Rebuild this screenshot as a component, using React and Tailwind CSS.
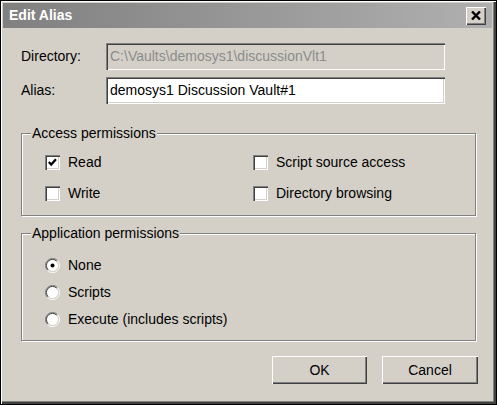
const font = { fontFamily: '"Liberation Sans", Arial, sans-serif' };

function CheckBox({ checked, label }) {
  return (
    <div className="flex h-[20px] items-center">
      <div className="flex h-[15px] w-[15px] items-center justify-center bg-white shadow-[inset_1px_1px_0_#808080,inset_2px_2px_0_#404040,inset_-1px_-1px_0_#fff,inset_-2px_-2px_0_#d4d0c8]">
        {checked && (
          <svg width="15" height="15" viewBox="0 0 15 15">
            <polyline points="3.8,7 6.2,9.6 11,4.2" fill="none" stroke="#000" strokeWidth="2.2" />
          </svg>
        )}
      </div>
      <span className="ml-[8px] text-[14px] text-black">{label}</span>
    </div>
  );
}

function Radio({ checked, label }) {
  return (
    <div className="flex h-[20px] items-center">
      <svg width="15" height="15" viewBox="0 0 15 15">
        <circle cx="7.5" cy="7.5" r="6" fill="#fff" />
        <path d="M2.5 12.5 A7 7 0 0 1 12.5 2.5" fill="none" stroke="#808080" />
        <path d="M12.5 2.5 A7 7 0 0 1 2.5 12.5" fill="none" stroke="#fff" />
        <path d="M3.2 11.8 A6 6 0 0 1 11.8 3.2" fill="none" stroke="#404040" />
        <path d="M11.8 3.2 A6 6 0 0 1 3.2 11.8" fill="none" stroke="#d4d0c8" />
        {checked && <circle cx="7.5" cy="7.5" r="2" fill="#000" />}
      </svg>
      <span className="ml-[8px] text-[14px] text-black">{label}</span>
    </div>
  );
}

function Button({ children, className = '' }) {
  return (
    <button className={`flex h-[28px] items-center justify-center bg-[#d4d0c8] text-[14px] text-black shadow-[inset_1px_1px_0_#fff,inset_-1px_-1px_0_#404040,inset_-2px_-2px_0_#808080] ${className}`}>
      {children}
    </button>
  );
}

function Group({ title, className = '', children }) {
  return (
    <div className={`relative w-[455px] border border-[#808080] shadow-[inset_1px_1px_0_#fff,1px_1px_0_#fff] ${className}`}>
      <span className="absolute -top-[9px] left-[9px] bg-[#d4d0c8] px-[1px] text-[14px] leading-[16px] text-black">{title}</span>
      {children}
    </div>
  );
}

export default function App() {
  return (
    <div style={font} className="flex h-[405px] w-[497px] flex-col border border-black bg-[#d4d0c8] pb-[4px] pl-[2px] pr-[4px] pt-[2px] shadow-[inset_1px_1px_0_#fff,inset_-1px_-1px_0_#404040,inset_-2px_-2px_0_#404040,inset_-3px_-3px_0_#808080]">
      <div className="flex h-[25px] shrink-0 items-center justify-between bg-gradient-to-r from-[#808080] to-[#b0b0b0] pl-[6px] pr-[6px]">
        <span className="text-[14px] font-bold text-white">Edit Alias</span>
        <div className="flex h-[18px] w-[20px] items-center justify-center bg-[#d4d0c8] shadow-[inset_1px_1px_0_#fff,inset_-1px_-1px_0_#404040,inset_-2px_-2px_0_#808080]">
          <svg width="10" height="9" viewBox="0 0 10 9">
            <path d="M1 0.5 L9 8.5 M9 0.5 L1 8.5" stroke="#000" strokeWidth="2.4" />
          </svg>
        </div>
      </div>

      <div className="flex flex-col pl-[18px]">
        <div className="mt-[15px] flex items-center">
          <span className="w-[85px] text-[14px] text-black">Directory:</span>
          <div className="flex h-[27px] w-[339px] items-center bg-[#d4d0c8] px-[4px] text-[14px] text-[#8c8c8c] shadow-[inset_1px_1px_0_#808080,inset_2px_2px_0_#404040,inset_-1px_-1px_0_#fff,inset_-2px_-2px_0_#d4d0c8]">
            C:\Vaults\demosys1\discussionVlt1
          </div>
        </div>
        <div className="mt-[7px] flex items-center">
          <span className="w-[85px] text-[14px] text-black">Alias:</span>
          <div className="flex h-[27px] w-[339px] items-center bg-white px-[4px] text-[14px] text-black shadow-[inset_1px_1px_0_#808080,inset_2px_2px_0_#404040,inset_-1px_-1px_0_#fff,inset_-2px_-2px_0_#d4d0c8]">
            demosys1 Discussion Vault#1
          </div>
        </div>

        <Group title="Access permissions" className="mt-[29px] h-[83px]">
          <div className="grid grid-cols-[208px_1fr] gap-y-[11px] pl-[23px] pt-[18px]">
            <CheckBox checked label="Read" />
            <CheckBox label="Script source access" />
            <CheckBox label="Write" />
            <CheckBox label="Directory browsing" />
          </div>
        </Group>

        <Group title="Application permissions" className="mt-[17px] h-[108px]">
          <div className="flex flex-col gap-[7px] pl-[23px] pt-[21px]">
            <Radio checked label="None" />
            <Radio label="Scripts" />
            <Radio label="Execute (includes scripts)" />
          </div>
        </Group>

        <div className="mt-[15px] flex w-[457px] justify-end gap-[15px]">
          <Button className="w-[95px]">OK</Button>
          <Button className="w-[96px]">Cancel</Button>
        </div>
      </div>
    </div>
  );
}
